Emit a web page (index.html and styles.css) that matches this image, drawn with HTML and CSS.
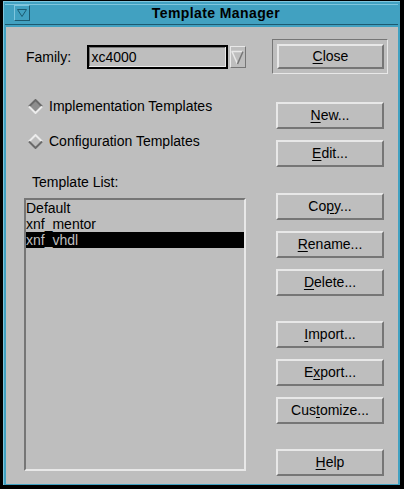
FILE: index.html
```html
<!DOCTYPE html>
<html>
  <head>
    <title>Template Manager</title>
    <link rel="stylesheet" href="styles.css">
  </head>
  <body>
    <div class="frame">
      <div class="titlebar">
        <div class="menu-btn">
          <svg width="10" height="8" viewBox="0 0 10 8">
            <polygon points="0.5,0.5 9.5,0.5 5,7.5" fill="none" stroke="#1d5a70" stroke-width="1" />
          </svg>
        </div>
        <div class="title">Template Manager</div>
      </div>

      <div class="content">
        <div class="left">
          <div class="family-row">
            <span class="family-label">Family:</span>
            <div class="field">xc4000</div>
            <div class="arrow-btn">
              <svg width="13" height="15" viewBox="0 0 13 15">
                <line x1="0.5" y1="1.5" x2="12.5" y2="1.5" stroke="#e8e8e8" stroke-width="1.5" />
                <line x1="1" y1="1.5" x2="6.5" y2="14" stroke="#e8e8e8" stroke-width="1.5" />
                <line x1="12" y1="1.5" x2="6.5" y2="14" stroke="#767676" stroke-width="1.5" />
              </svg>
            </div>
          </div>

          <div class="radio-row first">
            <svg class="diamond" width="15" height="15" viewBox="0 0 15 15">
              <polygon points="7.5,1 14,7.5 7.5,14 1,7.5" fill="#8e8e8e" />
              <polyline points="1,7.5 7.5,1 14,7.5" fill="none" stroke="#6a6a6a" stroke-width="2" />
              <polyline points="1,7.5 7.5,14 14,7.5" fill="none" stroke="#ececec" stroke-width="2" />
            </svg>
            <span>Implementation Templates</span>
          </div>
          <div class="radio-row">
            <svg class="diamond" width="15" height="15" viewBox="0 0 15 15">
              <polyline points="1,7.5 7.5,1 14,7.5" fill="none" stroke="#ececec" stroke-width="2" />
              <polyline points="1,7.5 7.5,14 14,7.5" fill="none" stroke="#6a6a6a" stroke-width="2" />
            </svg>
            <span>Configuration Templates</span>
          </div>

          <div class="list-label">Template List:</div>
          <div class="listbox">
            <div class="item">Default</div>
            <div class="item">xnf_mentor</div>
            <div class="item selected">xnf_vhdl</div>
          </div>
        </div>

        <div class="right">
          <div class="default-ring">
            <div class="btn"><u>C</u>lose</div>
          </div>

          <div class="group first">
            <div class="btn"><u>N</u>ew...</div>
            <div class="btn"><u>E</u>dit...</div>
          </div>
          <div class="group">
            <div class="btn">Co<u>p</u>y...</div>
            <div class="btn"><u>R</u>ename...</div>
            <div class="btn"><u>D</u>elete...</div>
          </div>
          <div class="group">
            <div class="btn"><u>I</u>mport...</div>
            <div class="btn">E<u>x</u>port...</div>
            <div class="btn">Cus<u>t</u>omize...</div>
          </div>
          <div class="group">
            <div class="btn"><u>H</u>elp</div>
          </div>
        </div>
      </div>
    </div>
  </body>
</html>
```

FILE: styles.css
```css
body {
  margin: 0;
  width: 404px;
  height: 489px;
  background: #000;
  font-family: "Liberation Sans", Arial, sans-serif;
  font-size: 14px;
  color: #000;
  overflow: hidden;
}
.frame {
  box-sizing: border-box;
  margin: 1px 4px 0 3px;
  height: 484px;
  padding: 2px 2px 2px 2px;
  background: #41a1c1;
  border-top: 1px solid #7fc6de;
  border-left: 1px solid #7fc6de;
}
.titlebar {
  box-sizing: border-box;
  height: 21px;
  margin-bottom: 2px;
  margin-left: -1px;
  display: flex;
  align-items: flex-start;
  border-top: 1px solid #7fc6de;
  border-bottom: 1px solid #1d5a70;
}
.menu-btn {
  box-sizing: border-box;
  width: 16px;
  height: 16px;
  margin-left: 9px;
  border-top: 1px solid #7fc6de;
  border-left: 1px solid #7fc6de;
  border-right: 1px solid #1d5a70;
  border-bottom: 1px solid #1d5a70;
  display: flex;
  align-items: center;
  justify-content: center;
}
.title {
  flex: 1;
  text-align: center;
  font-weight: bold;
  font-size: 14px;
  letter-spacing: 0.4px;
  line-height: 17px;
  padding-left: 4px;
}
.content {
  box-sizing: border-box;
  height: 457px;
  background: #bebebe;
  display: flex;
  gap: 26px;
  padding: 12px 0 0 18px;
}
.left {
  width: 222px;
  padding-top: 6px;
}
.family-row {
  display: flex;
  align-items: center;
  height: 24px;
}
.family-label {
  width: 65px;
  padding-left: 2px;
}
.field {
  box-sizing: border-box;
  width: 148px;
  height: 24px;
  border: 2px solid #000;
  box-shadow: inset -1px -1px 0 #e8e8e8, inset 1px 1px 0 #767676;
  padding-left: 2px;
  line-height: 20px;
}
.arrow-btn {
  box-sizing: border-box;
  width: 17px;
  height: 22px;
  margin-left: 2px;
  border-top: 1px solid #e8e8e8;
  border-left: 1px solid #e8e8e8;
  border-right: 1px solid #767676;
  border-bottom: 1px solid #767676;
  display: flex;
  align-items: center;
  justify-content: center;
}
.radio-row {
  display: flex;
  align-items: center;
  height: 16px;
  margin-top: 19px;
  padding-left: 4px;
}
.radio-row.first {
  margin-top: 29px;
}
.diamond {
  margin-right: 6px;
}
.list-label {
  margin-top: 25px;
  padding-left: 8px;
  line-height: 16px;
}
.listbox {
  box-sizing: border-box;
  margin-top: 8px;
  height: 273px;
  border-style: solid;
  border-width: 2px;
  border-color: #767676 #e8e8e8 #e8e8e8 #767676;
}
.item {
  line-height: 16px;
  height: 16px;
  padding-left: 0;
}
.item.selected {
  background: #000;
  color: #bebebe;
}
.right {
  width: 116px;
}
.default-ring {
  box-sizing: border-box;
  height: 35px;
  padding: 4px 3px 4px 4px;
  border-style: solid;
  border-width: 1px;
  border-color: #767676 #e8e8e8 #e8e8e8 #767676;
}
.btn {
  box-sizing: border-box;
  height: 27px;
  border-style: solid;
  border-width: 2px;
  border-color: #e8e8e8 #767676 #767676 #e8e8e8;
  text-align: center;
  line-height: 23px;
}
.default-ring .btn {
  height: 25px;
  line-height: 21px;
}
.group {
  margin: 25px 4px 0 4px;
  display: flex;
  flex-direction: column;
  gap: 11px;
}
.group.first {
  margin-top: 28px;
}
.group.first + .group {
  margin-top: 26px;
}
u {
  text-underline-offset: 2px;
}
```
